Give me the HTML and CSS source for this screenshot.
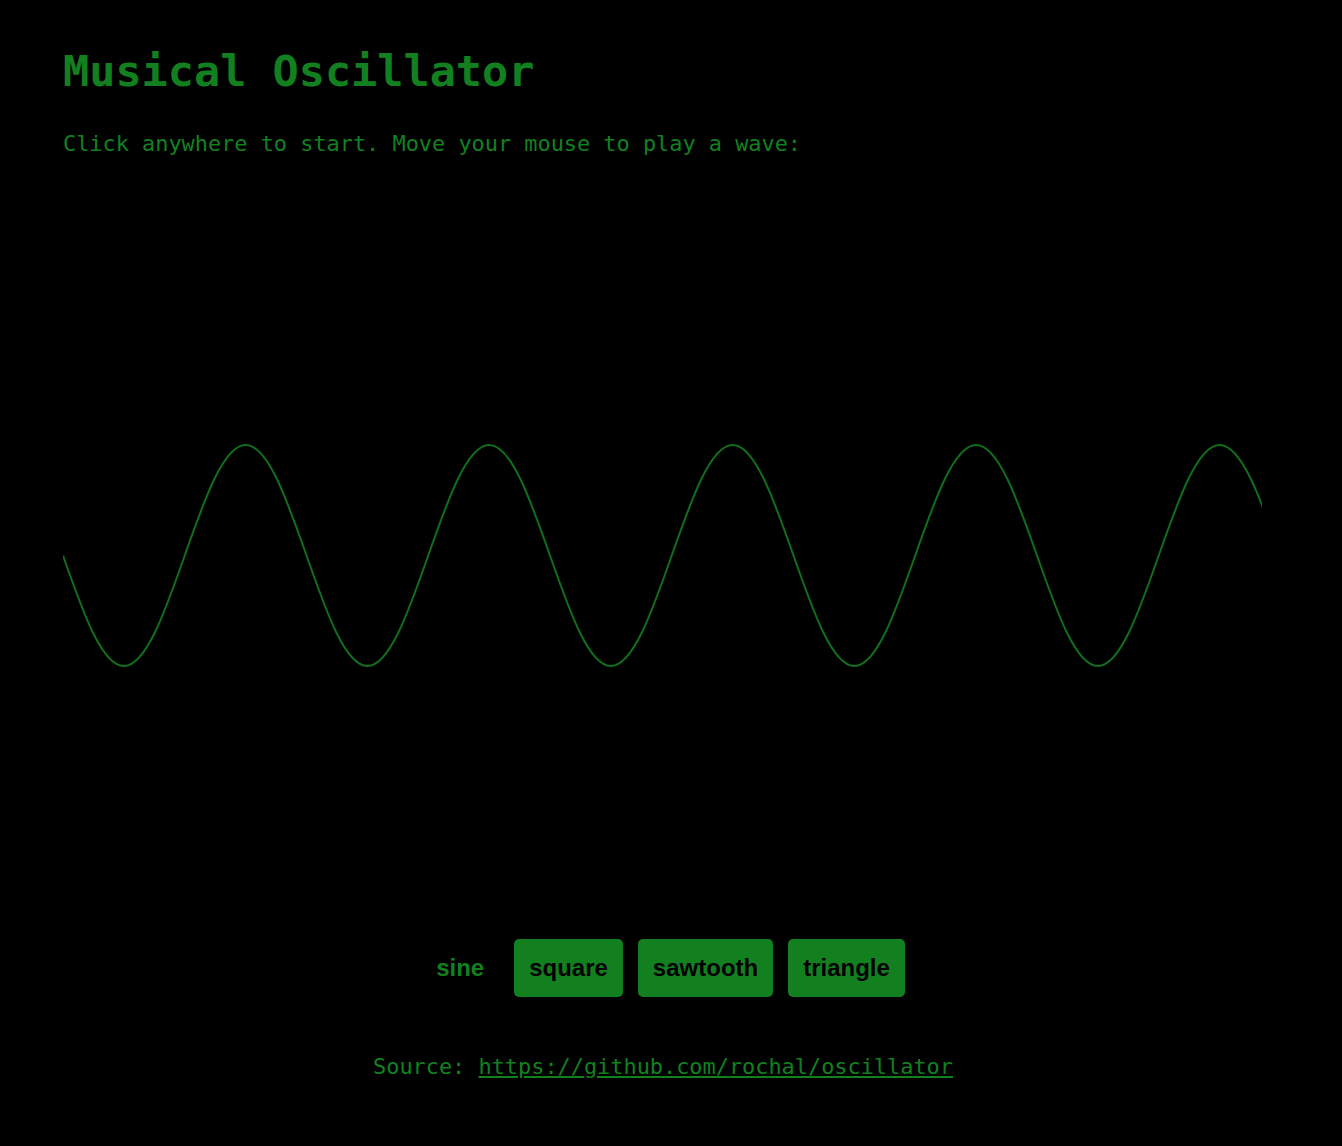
FILE: index.html
```html
<!DOCTYPE html>
<html lang="en">
<head>
<meta charset="utf-8">
<title>Musical Oscillator</title>
<link rel="stylesheet" href="styles.css">
</head>
<body>
<main class="app">
  <h1 class="title">Musical Oscillator</h1>
  <p class="intro">Click anywhere to start. Move your mouse to play a wave:</p>
  <svg class="scope" width="1199" height="740" viewBox="0 0 1199 740">
    <g transform="translate(0 370.5) scale(38.754 110.5)">
      <path class="wave" vector-effect="non-scaling-stroke" d="M0 0 C0.5123 0.5123 1.0023 1 1.5708 1
        s1.0585 -0.4877 1.5708 -1 s1.0023 -1 1.5708 -1 s1.0585 0.4877 1.5708 1
        s1.0023 1 1.5708 1 s1.0585 -0.4877 1.5708 -1 s1.0023 -1 1.5708 -1 s1.0585 0.4877 1.5708 1
        s1.0023 1 1.5708 1 s1.0585 -0.4877 1.5708 -1 s1.0023 -1 1.5708 -1 s1.0585 0.4877 1.5708 1
        s1.0023 1 1.5708 1 s1.0585 -0.4877 1.5708 -1 s1.0023 -1 1.5708 -1 s1.0585 0.4877 1.5708 1
        s1.0023 1 1.5708 1 s1.0585 -0.4877 1.5708 -1 s1.0023 -1 1.5708 -1 s1.0585 0.4877 1.5708 1"/>
    </g>
  </svg>
  <div class="waves">
    <button class="wave-btn is-active" type="button">sine</button>
    <button class="wave-btn" type="button">square</button>
    <button class="wave-btn" type="button">sawtooth</button>
    <button class="wave-btn" type="button">triangle</button>
  </div>
  <p class="source">Source: <a href="#">https://github.com/rochal/oscillator</a></p>
</main>
</body>
</html>
```
FILE: styles.css
```css
html, body {
  margin: 0;
  padding: 0;
  background: #000;
}

body {
  color: #138020;
  font-family: "DejaVu Sans Mono", "Liberation Mono", monospace;
}

.app {
  width: 1200px;
  margin-left: 63px;
  padding-top: 46px;
  padding-bottom: 40px;
}

.title {
  margin: 0;
  font-size: 43.5px;
  line-height: 51px;
  font-weight: bold;
}

.intro {
  margin: 34px 0 0;
  font-size: 21.9px;
  line-height: 25px;
}

.scope {
  display: block;
  margin-top: 29px;
  overflow: hidden;
}

.wave {
  fill: none;
  stroke: #116e1c;
  stroke-width: 2;
}

.waves {
  display: flex;
  justify-content: center;
  gap: 15px;
  margin-top: 14px;
}

.wave-btn {
  font-family: "Liberation Sans", Arial, sans-serif;
  font-weight: bold;
  font-size: 24px;
  line-height: 28px;
  padding: 15px;
  border: none;
  border-radius: 5px;
  background: #138020;
  color: #000;
  cursor: pointer;
}

.wave-btn.is-active {
  background: transparent;
  color: #138020;
}

.source {
  margin: 57px 0 0;
  text-align: center;
  font-size: 21.9px;
  line-height: 25px;
}

.source a {
  color: #138020;
  text-decoration: underline;
}
```
